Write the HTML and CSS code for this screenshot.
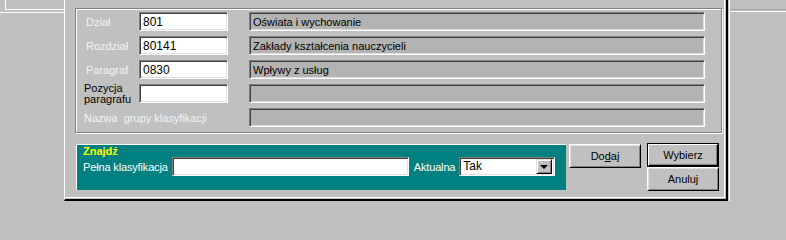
FILE: index.html
```html
<!DOCTYPE html>
<html lang="pl">
<head>
<meta charset="utf-8">
<title>Klasyfikacja</title>
<link rel="stylesheet" href="styles.css">
</head>
<body>
<div class="desk">
  <div class="win-left">
    <div class="wl-box"></div>
    <div class="wl-line"></div>
  </div>
  <div class="dialog">
    <div class="group">
      <div class="grid">
        <span class="lbl lbl-in">Dział</span>
        <div class="field inp">801</div>
        <div class="field ro">Oświata i wychowanie</div>

        <span class="lbl lbl-in">Rozdział</span>
        <div class="field inp">80141</div>
        <div class="field ro">Zakłady kształcenia nauczycieli</div>

        <span class="lbl lbl-in">Paragraf</span>
        <div class="field inp">0830</div>
        <div class="field ro">Wpływy z usług</div>

        <span class="lbl lbl-dark">Pozycja<br>paragrafu</span>
        <div class="field inp"></div>
        <div class="field ro"></div>

        <span class="lbl lbl-wide">Nazwa&nbsp; grupy klasyfikacji</span>
        <div class="field ro"></div>
      </div>
    </div>
    <div class="bottom">
      <div class="find">
        <div class="find-title">Znajdź</div>
        <div class="find-row">
          <span class="find-lbl">Pełna klasyfikacja</span>
          <div class="field find-inp"></div>
          <span class="find-lbl find-akt">Aktualna</span>
          <div class="field select">
            <span class="sel-val">Tak</span>
            <span class="sel-btn"><span class="arrow"></span></span>
          </div>
        </div>
      </div>
      <div class="btn btn-add">Do<u>d</u>aj</div>
      <div class="btn-col">
        <div class="btn btn-default"><span class="btn-inner">Wybierz</span></div>
        <div class="btn">Anuluj</div>
      </div>
    </div>
  </div>
  <div class="win-right">
    <div class="wr-dark"></div>
    <div class="wr-light"></div>
  </div>
</div>
</body>
</html>
```

FILE: styles.css
```css
* { box-sizing: border-box; }
html, body { margin: 0; padding: 0; }
body {
  width: 786px;
  height: 201px;
  overflow: hidden;
  background: #c0c0c0;
  font-family: "Liberation Sans", Arial, sans-serif;
  font-size: 11px;
  color: #000;
}
.desk {
  display: flex;
  height: 201px;
}

/* background window on the left */
.win-left {
  width: 64px;
  flex: none;
}
.wl-box {
  margin-left: 5px;
  height: 10px;
  border-left: 1px solid #fff;
  border-bottom: 1px solid #fff;
}
.wl-line {
  margin-top: 2px;
  height: 1px;
  background: #fff;
}

/* dialog */
.dialog {
  width: 664px;
  flex: none;
  height: 201px;
  border-left: 1px solid #fff;
  border-right: 2px solid #000;
  border-bottom: 2px solid #000;
  box-shadow: inset -1px -1px 0 #c0c0c0, inset -2px -2px 0 #fff;
  padding-top: 8px;
}
.group {
  margin-left: 10px;
  width: 647px;
  height: 125px;
  border: 1px solid #808080;
  box-shadow: inset 1px 1px 0 #fff, 1px 1px 0 #fff;
  padding: 3px 0 0 8px;
}
.grid {
  display: grid;
  grid-template-columns: 55px 89px 477px;
  grid-auto-rows: 19px;
  row-gap: 5px;
  align-items: center;
}
.lbl {
  color: #f4f4f4;
  line-height: 12px;
  white-space: nowrap;
}
.lbl-in { padding-left: 2px; }
.lbl-dark { color: #000; line-height: 11px; }
.lbl-wide { grid-column: 1 / 3; }

.field {
  height: 19px;
  border: 1px solid;
  border-color: #808080 #fff #fff #808080;
  box-shadow: inset 1px 1px 0 #404040, inset -1px -1px 0 #dfdfdf;
  padding: 2px 2px 0 3px;
  line-height: 14px;
  white-space: nowrap;
  overflow: hidden;
}
.inp { background: #fff; font-size: 12px; }
.ro {
  background: #b3b3b3;
  margin-left: 21px;
  width: 456px;
  font-size: 11px;
}

/* bottom area */
.bottom {
  display: flex;
  align-items: flex-start;
  margin-top: 11px;
  margin-left: 11px;
}
.find {
  width: 490px;
  height: 46px;
  background: #008080;
  border-top: 1px solid #fff;
  border-left: 1px solid #fff;
  padding: 0 0 0 6px;
}
.find-title {
  color: #ffff00;
  font-weight: bold;
  line-height: 12px;
}
.find-row {
  display: flex;
  align-items: center;
  height: 19px;
}
.find-lbl {
  color: #fff;
  white-space: nowrap;
  letter-spacing: -0.15px;
}
.find-inp {
  width: 237px;
  margin-left: 4px;
  background: #fff;
}
.find-akt { margin-left: 5px; }
.select {
  width: 96px;
  margin-left: 4px;
  background: #fff;
  display: flex;
  align-items: center;
  padding: 2px 2px 2px 3px;
  font-size: 12px;
}
.sel-val { flex: 1; line-height: 13px; }
.sel-btn {
  width: 16px;
  height: 15px;
  background: #c0c0c0;
  border: 1px solid;
  border-color: #dfdfdf #000 #000 #dfdfdf;
  box-shadow: inset 1px 1px 0 #fff, inset -1px -1px 0 #808080;
  display: flex;
  align-items: center;
  justify-content: center;
}
.arrow {
  width: 0;
  height: 0;
  border-left: 4px solid transparent;
  border-right: 4px solid transparent;
  border-top: 4px solid #000;
}

.btn {
  width: 72px;
  height: 24px;
  background: #c0c0c0;
  border: 1px solid;
  border-color: #fff #000 #000 #fff;
  box-shadow: inset 1px 1px 0 #dfdfdf, inset -1px -1px 0 #808080;
  display: flex;
  align-items: center;
  justify-content: center;
  line-height: 12px;
}
.btn-add { margin-left: 3px; }
.btn-col {
  display: flex;
  flex-direction: column;
  margin-left: 6px;
  margin-top: -1px;
}
.btn-default {
  border: 1px solid #000;
  box-shadow: none;
  padding: 0;
}
.btn-inner {
  width: 100%;
  height: 100%;
  border: 1px solid;
  border-color: #fff #000 #000 #fff;
  box-shadow: inset -1px -1px 0 #808080;
  display: flex;
  align-items: center;
  justify-content: center;
}

/* background window on the right */
.win-right {
  flex: 1;
  margin-left: 1px;
  border-left: 1px solid #fff;
}
.wr-dark {
  margin-top: 9px;
  height: 1px;
  background: #a0a0a0;
}
.wr-light {
  margin-top: 1px;
  height: 1px;
  background: #fff;
}
```
